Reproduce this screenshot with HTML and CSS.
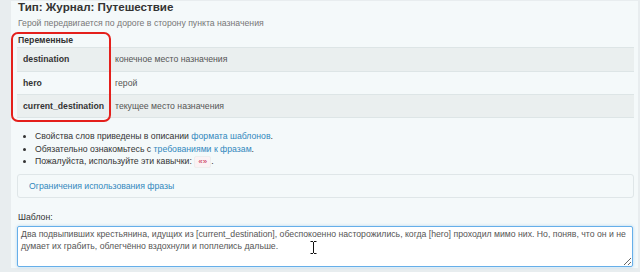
FILE: index.html
```html
<!DOCTYPE html>
<html lang="ru">
  <head>
    <meta charset="UTF-8" />
    <title>Тип: Журнал: Путешествие</title>
    <link rel="stylesheet" href="styles.css">
  </head>
  <body>
    <div class="page">
      <div class="panel">
        <h3 class="type-title">Тип: Журнал: Путешествие</h3>
        <p class="type-desc">Герой передвигается по дороге в сторону пункта назначения</p>

        <div class="vars">
          <div class="vars-title">Переменные</div>
          <table class="vars-table">
            <tr>
              <th>destination</th>
              <td>конечное место назначения</td>
            </tr>
            <tr>
              <th>hero</th>
              <td>герой</td>
            </tr>
            <tr>
              <th>current_destination</th>
              <td>текущее место назначения</td>
            </tr>
          </table>
          <div class="highlight"></div>
        </div>

        <ul class="notes">
          <li>Свойства слов приведены в описании <a href="#">формата шаблонов</a>.</li>
          <li>Обязательно ознакомьтесь с <a href="#">требованиями к фразам</a>.</li>
          <li>Пожалуйста, используйте эти кавычки: <code>«»</code>.</li>
        </ul>

        <div class="restrictions">
          <a href="#">Ограничения использования фразы</a>
        </div>

        <label class="tpl-label" for="tpl">Шаблон:</label>
        <div class="tpl-wrap">
          <textarea id="tpl" rows="3">Два подвыпивших крестьянина, идущих из [current_destination], обеспокоенно насторожились, когда [hero] проходил мимо них. Но, поняв, что он и не думает их грабить, облегчённо вздохнули и поплелись дальше.</textarea>
          <svg class="ibeam" width="7" height="13" viewBox="0 0 7 13">
            <path d="M0.5 0.5h2.5M4 0.5h2.5M3.5 1v11M0.5 12.5h2.5M4 12.5h2.5" stroke="#111" stroke-width="1" fill="none" />
          </svg>
        </div>
      </div>
    </div>
  </body>
</html>
```

FILE: styles.css
```css
* {
  box-sizing: border-box;
}

body {
  margin: 0;
  background-color: #e8edef;
  font-family: "Liberation Sans", Arial, sans-serif;
  font-size: 8.7px;
  line-height: 12.4px;
  color: #333;
}

.page {
  width: 640px;
  height: 272px;
  padding: 2px 2px 0 11px;
  overflow: hidden;
}

.panel {
  height: 267px;
  padding: 0 4px 0 6px;
  background-color: #f4f9fa;
}

a {
  color: #3288bd;
  text-decoration: none;
}

.type-title {
  margin: -1px 0 4px 1px;
  font-size: 11.6px;
  line-height: 12px;
  font-weight: bold;
  color: #333;
}

.type-desc {
  margin: 0 0 4.6px 1px;
  color: #777;
}

.vars {
  position: relative;
}

.vars-title {
  margin-left: 1px;
  margin-bottom: 0.8px;
  font-weight: bold;
}

.vars-table {
  width: 100%;
  border-collapse: collapse;
}

.vars-table th,
.vars-table td {
  padding: 5px 5px 5px 6px;
  border-top: 1px solid #dde5e6;
  text-align: left;
  white-space: nowrap;
}

.vars-table th {
  width: 94px;
  font-weight: bold;
}

.vars-table td {
  color: #555;
  padding-left: 4px;
}

.vars-table tr:nth-child(odd) {
  background-color: #eaefef;
}

.vars-table tr:last-child th,
.vars-table tr:last-child td {
  border-bottom: 1px solid #dde5e6;
}

.highlight {
  position: absolute;
  left: -6px;
  top: -2px;
  width: 100px;
  height: 90px;
  border: 2px solid #e4201c;
  border-radius: 7px;
}

.notes {
  margin: 12px 0 5.7px;
  padding-left: 18px;
}

code {
  padding: 1px 3px;
  font-family: "Liberation Mono", monospace;
  font-size: 7.5px;
  color: #c7254e;
  background-color: #fbf2f4;
  border: 1px solid #eee;
  border-radius: 2px;
}

.restrictions {
  padding: 4.5px 11px;
  border: 1px solid #dfe6e8;
  border-radius: 3px;
}

.tpl-label {
  display: block;
  margin: 12.8px 0 3.5px 1px;
}

.tpl-wrap {
  position: relative;
  padding-right: 1px;
}

textarea {
  display: block;
  width: 100%;
  height: 40.5px;
  padding: 2px 3px;
  border: 1px solid #66afe9;
  border-radius: 2px;
  background-color: #fff;
  box-shadow: 0 0 3px rgba(102, 175, 233, 0.5);
  font-family: "Liberation Sans", Arial, sans-serif;
  font-size: 8.7px;
  line-height: 11.6px;
  color: #555;
  outline: none;
}

.ibeam {
  position: absolute;
  left: 293px;
  top: 15px;
}
```
